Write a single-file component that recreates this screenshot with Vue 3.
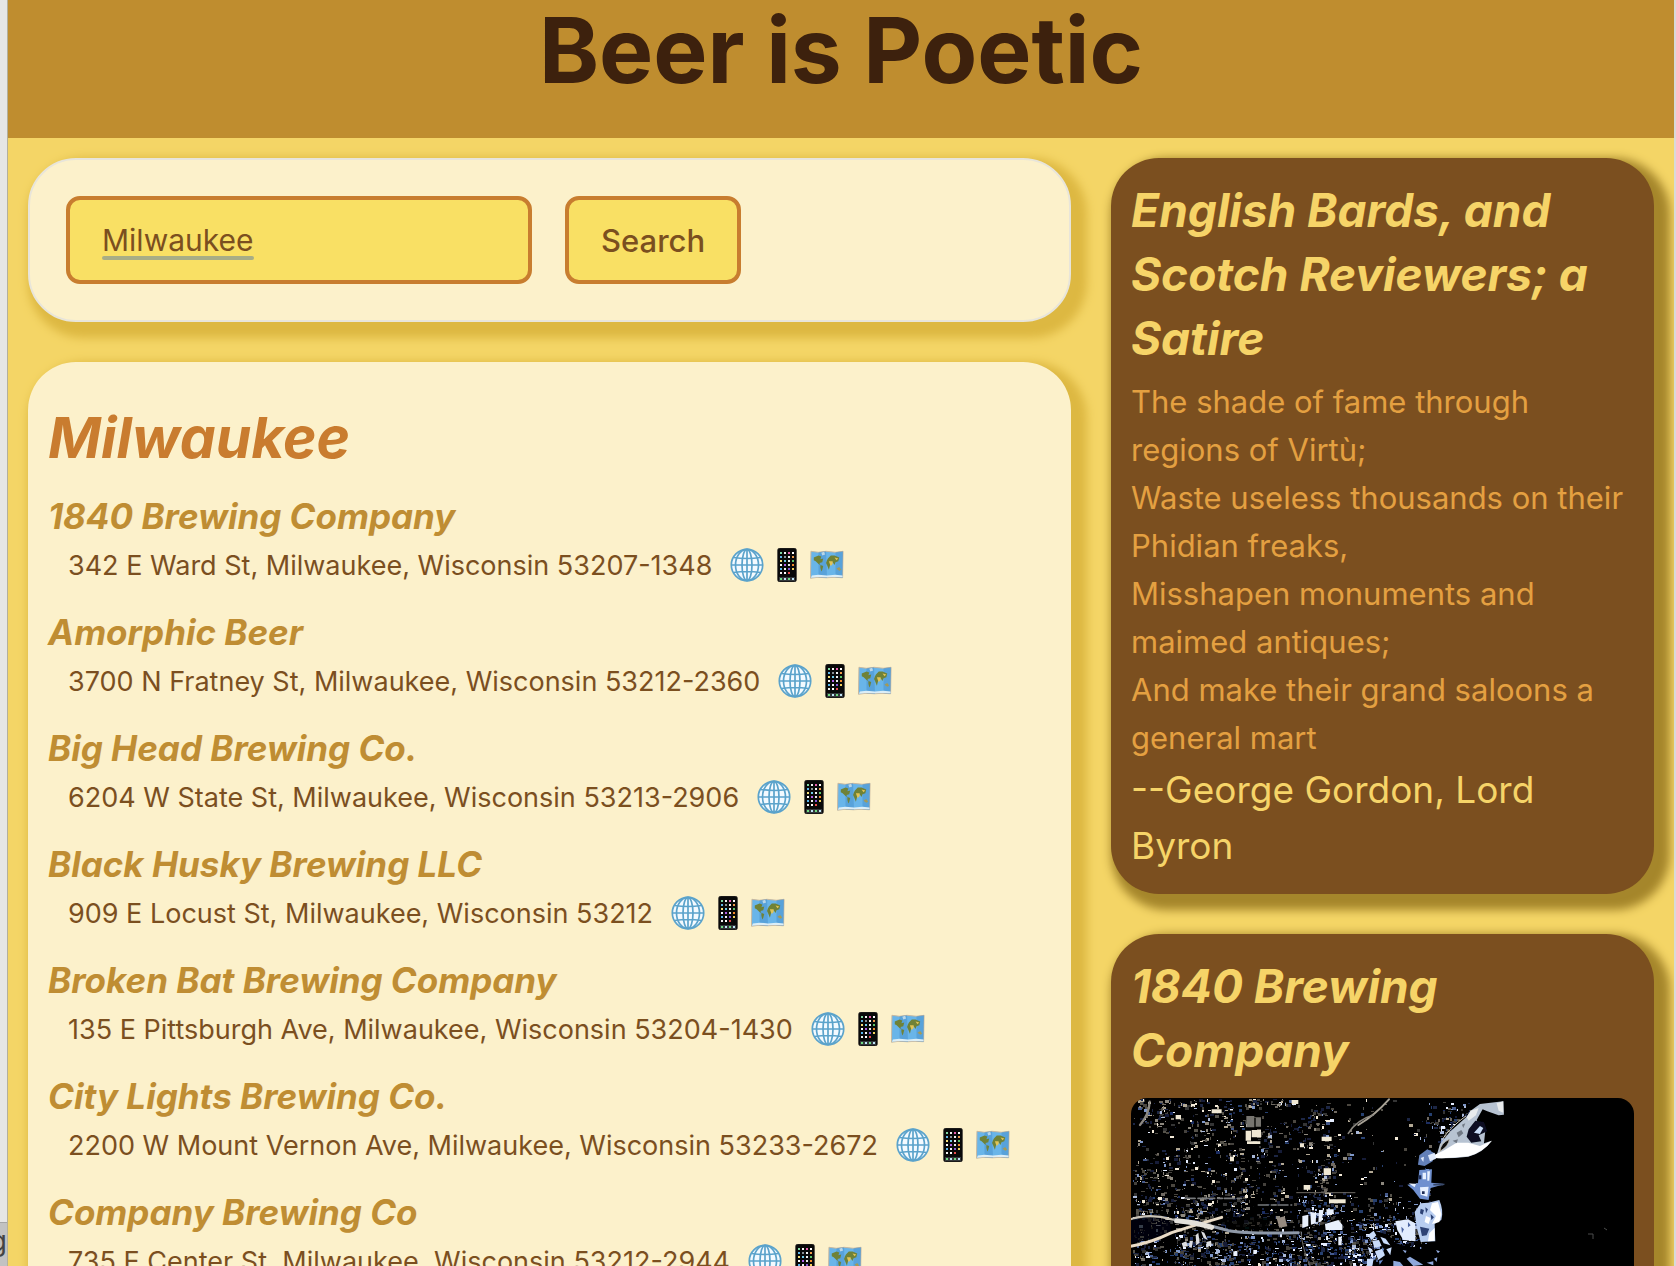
<script setup>
import { ref } from 'vue'

const query = ref('Milwaukee')

const breweries = [
  { name: '1840 Brewing Company', address: '342 E Ward St, Milwaukee, Wisconsin 53207-1348' },
  { name: 'Amorphic Beer', address: '3700 N Fratney St, Milwaukee, Wisconsin 53212-2360' },
  { name: 'Big Head Brewing Co.', address: '6204 W State St, Milwaukee, Wisconsin 53213-2906' },
  { name: 'Black Husky Brewing LLC', address: '909 E Locust St, Milwaukee, Wisconsin 53212' },
  { name: 'Broken Bat Brewing Company', address: '135 E Pittsburgh Ave, Milwaukee, Wisconsin 53204-1430' },
  { name: 'City Lights Brewing Co.', address: '2200 W Mount Vernon Ave, Milwaukee, Wisconsin 53233-2672' },
  { name: 'Company Brewing Co', address: '735 E Center St, Milwaukee, Wisconsin 53212-2944' }
]

const poem = [
  'The shade of fame through regions of Virtù;',
  'Waste useless thousands on their Phidian freaks,',
  'Misshapen monuments and maimed antiques;',
  'And make their grand saloons a general mart'
]

// App tiles on the phone icon, row by row
const tileColors = ['#7fd6a0', '#f2f2f2', '#e85fb0', '#fff', '#62b7e8', '#8a8f94', '#f2f2f2', '#ef9a4a', '#f7e07a', '#6ecbe8', '#f2f2f2', '#5cc46a', '#fff', '#b05fe8', '#e8e8e8', '#f08a2c', '#58b7f0', '#f2f2f2', '#8456d8', '#f2d05c', '#f2f2f2', '#fff', '#e84d4d']
const tiles = tileColors.map((color, i) => ({
  x: 10 + (i % 4) * 4,
  y: 4 + Math.floor(i / 4) * 4,
  color
}))

// City lights: deterministic scatter of small blocks, grouped by neighbourhood
let seed = 1840
const random = () => {
  seed = (seed * 1664525 + 1013904223) % 4294967296
  return seed / 4294967296
}
const coast = [[0, 365], [40, 318], [60, 296], [85, 298], [120, 300], [160, 304], [400, 320]]
const coastAt = (y) => {
  const i = coast.findIndex((p) => p[0] > y)
  const [a, b] = [coast[i - 1], coast[i]]
  return a[1] + ((b[1] - a[1]) * (y - a[0])) / (b[0] - a[0])
}
const warm = ['#f3ead8', '#b3a995', '#8d887e', '#6f6a62', '#4b4740']
const cool = ['#e6eeff', '#7f97c8', '#26406f', '#1a2f63', '#445a8c', '#a9b8d8']
const dim = ['#343434', '#1d2644', '#45423d', '#141c38', '#56534c']
const pick = (list) => list[Math.floor(random() * list.length)]
const districts = Array.from({ length: 30 * 30 }, () => random())
const blocks = []
for (let i = 0; i < 15000; i++) {
  const y = Math.floor(random() * 260)
  const x = Math.floor(random() * 350)
  const bright = random()
  const keep = random()
  if (x > coastAt(y)) continue
  if (x % 41 < 2 || y % 27 < 1) continue
  let density = districts[Math.floor(y / 10) * 30 + Math.floor(x / 14)] * 0.85
  if (y < 95) density *= 0.75
  if (x > 205 && x < 285 && y < 125) density *= 0.2
  if (y > 28 && y < 50 && x < 48) density *= 0.15
  if (x > 153 && x < 166 && y > 50 && y < 130) density *= 0.1
  if (y > 95) density = density * 0.8 + 0.15
  if (y > 120 && x > 150) density += 0.2
  if (keep > density) continue
  const chilly = y > 135 || (y > 95 && x > 165) || x > 285
  const palette = bright < 0.5 ? dim : random() < (chilly ? 0.85 : 0.3) ? cool : warm
  blocks.push({
    x,
    y,
    w: 1 + Math.floor(random() * 4),
    h: 1 + Math.floor(random() * 3),
    color: pick(palette)
  })
}
</script>

<template>
  <div class="desktop">
    <svg class="symbols" aria-hidden="true">
      <symbol id="globe" viewBox="0 0 34 34">
        <circle cx="17" cy="17" r="16" fill="#f3faff" />
        <g fill="none" stroke="#5ba3cb" stroke-width="1.7">
          <circle cx="17" cy="17" r="15.7" />
          <ellipse cx="17" cy="17" rx="11.5" ry="15.7" />
          <ellipse cx="17" cy="17" rx="5" ry="15.7" />
          <path d="M17 1v32M1.500 17h31M3.500 9.500Q17 11.500 30.500 9.500M3.500 24.500Q17 22.500 30.500 24.500" />
        </g>
      </symbol>
      <symbol id="phone" viewBox="0 0 34 34">
        <rect x="7.500" y="0" width="19" height="34" rx="2.500" fill="#090909" stroke="#44403a" stroke-width=".6" />
        <rect v-for="(t, i) in tiles" :key="i" :x="t.x" :y="t.y" width="2" height="2" :fill="t.color" />
        <path d="M9 29h16v4H9z" fill="#34383c" />
        <path d="M10 30h2v2h-2zM18 30h2v2h-2z" fill="#70dc82" />
        <path d="M14 30h2v2h-2zM22 30h2v2h-2z" fill="#bfe4f6" />
      </symbol>
      <symbol id="map" viewBox="0 0 36 34">
        <path d="M1 2.500l8 1 8-1 10 1 8-1-.5 28-8-.5-9 .5-9-.5-8 1z" fill="#69b5e9" stroke="#c8b79e" stroke-width="1" />
        <path d="M9 3.500l8-1 1 28-9-.5zM27 3.500l8-1-.5 28-7.500-.5z" fill="#4b92cd" opacity=".55" />
        <path d="M2 28l7-.8 9 .8 9-.8 7.500.8v2l-8-.4-9 .4-9-.4-7.500 1z" fill="#dceef7" />
        <path d="M4 9l5-2 3 1-1 3 3-1-1 4-3 1 1 2-2-1-3-3-2-1zM11 17l3 1-1 4-1 2-1-4zM19 10l3-3 4 0 5 2-1 4-3 1-1 3-2-3-2 0-1 4-1 4-2-5-1-2 1-3z" fill="#6f8237" />
        <path d="M20 13l4 0 0 3-2 2-1-2zM26 9l4 1-2 2z" fill="#e3c454" />
        <path d="M28 21l3-2 2 3-2 1z" fill="#a59a55" />
        <path d="M12 4l3-1 1 3-3 1z" fill="#b9d6e8" />
      </symbol>
    </svg>

    <div class="backdrop-left"><span class="backdrop-tab">g</span></div>

    <div class="window">
      <header class="banner">
        <h1>Beer is Poetic</h1>
      </header>

      <main class="columns">
        <div class="primary">
          <form class="card search" @submit.prevent>
            <div class="field">
              <input v-model="query" type="text" aria-label="City" />
              <span class="spelling-mark"></span>
            </div>
            <button type="submit">Search</button>
          </form>

          <section class="card results">
            <h2>Milwaukee</h2>
            <ul>
              <li v-for="b in breweries" :key="b.name">
                <h3>{{ b.name }}</h3>
                <p>
                  <span>{{ b.address }}</span>
                  <a href="#" aria-label="Website"><svg><use href="#globe" /></svg></a>
                  <a href="#" aria-label="Phone"><svg><use href="#phone" /></svg></a>
                  <a href="#" aria-label="Map"><svg><use href="#map" /></svg></a>
                </p>
              </li>
            </ul>
          </section>
        </div>

        <aside class="secondary">
          <section class="card dark">
            <h2>English Bards, and Scotch Reviewers; a Satire</h2>
            <p v-for="line in poem" :key="line" class="verse">{{ line }}</p>
            <p class="author">--George Gordon, Lord Byron</p>
          </section>

          <section class="card dark">
            <h2>1840 Brewing Company</h2>
            <svg class="satellite" viewBox="0 0 503 260" role="img" aria-label="Satellite view of Milwaukee">
              <filter id="soft"><feGaussianBlur stdDeviation=".5" /></filter>
              <rect width="503" height="260" fill="#000" />
              <g filter="url(#soft)">
                <rect v-for="(b, i) in blocks" :key="i" :x="b.x" :y="b.y" :width="b.w" :height="b.h" :fill="b.color" />

                <!-- inland: roads, rail yards, large roofs -->
                <g transform="scale(.3333) translate(-18 -24)">
                  <path d="M0 392Q70 368 135 392L140 425Q80 450 18 460Z" fill="#05070c" opacity=".7" />
                  <path d="M255 385Q330 375 440 385L430 415L340 422Z" fill="#000" opacity=".8" />
                  <path d="M375 345Q440 352 505 355M535 425Q610 410 650 378M18 350H110" fill="none" stroke="#000" stroke-width="9" />
                  <g fill="none" stroke-linecap="round">
                    <path d="M10 390Q70 368 140 388L190 395" stroke="#c9c3b7" stroke-width="7" />
                    <path d="M10 470Q75 460 140 428Q200 408 290 382" stroke="#eadcc7" stroke-width="9" />
                    <path d="M150 390Q230 398 310 422Q370 432 520 428" stroke="#8f99a8" stroke-width="9" />
                    <path d="M155 392Q210 396 260 412" stroke="#e4e1da" stroke-width="15" />
                    <path d="M700 105Q750 75 792 28" stroke="#a8a296" stroke-width="6" />
                    <path d="M670 130Q695 90 745 75" stroke="#8c8881" stroke-width="5" />
                    <path d="M45 105Q72 75 74 35" stroke="#8c8881" stroke-width="7" />
                    <path d="M528 425Q530 470 555 528M515 308H690" stroke="#6e6a63" stroke-width="3" />
                    <path d="M180 325H350M400 345H500" stroke="#77797c" stroke-width="5" stroke-dasharray="30 9 14 6" />
                  </g>
                  <path d="M362 122h16v30h-16zM380 120h28v22h-28zM366 154h40v8h-40zM590 140h30v13h-30zM596 235h22v20h-22zM152 75h16v13h-16zM315 200h12v14h-12zM525 160h12v12h-12zM500 30h20v12h-20zM260 58h30v12h-30zM612 328h50v12h-50zM536 285h20v14h-20z" fill="#f0e8d4" />
                  <path d="M364 78h24v34h-24zM392 82h16v28h-16z" fill="#77756f" />
                  <path d="M532 378l18-4v34l-18 6zM556 366l18 2-2 32-14 4zM582 360l14 0-6 34-10 4zM604 358h22v12l-20 8zM600 402l40-12 12 14v16l-50 0zM640 440h10v26h-10zM325 484h12v14h-12zM385 480h10v12h-10z" fill="#e9f0fb" />
                  <path d="M170 460l14-6 4 14-14 4zM194 452l10 0-4 22-8-4zM212 436l8-8 4 30-10 8zM228 424l10 4 10 22-12-6zM244 456l14-4 2 14-14 6z" fill="#dcdde0" />
                  <path d="M455 385l24-6 8 30-24 4z" fill="#958a80" />
                </g>

                <!-- shoreline -->
                <g transform="scale(.3333) translate(807 -24)">
                  <path d="M112 190L120 162L150 125L200 80L212 62L240 42L310 34L312 74L296 76L262 64L248 58L230 90L240 112L256 122L252 160L275 152Q250 188 205 200Q150 206 105 204Z" fill="#b7c3d2" />
                  <path d="M104 194L130 182L170 158L205 158L240 168L276 152Q250 186 205 199Q150 206 104 204Z" fill="#fff" />
                  <path d="M200 82L212 62L236 54L228 76L206 92ZM290 40L310 34V68L296 62Z" fill="#e8ebec" />
                  <path d="M206 118L226 92L252 96L262 124L236 136L244 154L214 158L200 140Z" fill="#0a1020" />
                  <path d="M222 128L240 108L250 114L240 132Z" fill="#c9dcf7" />
                  <path d="M170 128l14-8 6 10-14 12zM158 152l16-4-4 12zM186 104l10-4-6 14z" fill="#6f7884" />
                  <path d="M120 184Q122 160 148 148Q146 168 120 184Z" fill="#0a0c10" stroke="#c9bda8" stroke-width="2" />
                  <path d="M126 150Q150 112 198 78" fill="none" stroke="#d6cfbf" stroke-width="3" />
                  <path d="M58 196L82 178L104 190L98 214L74 228L54 224Z" fill="#6380b8" />
                  <path d="M84 196l20-8 4 18-18 8zM62 204l10-4-2 16z" fill="#dfe9fb" />
                  <path d="M58 240L96 238L94 278L136 282L92 294L86 330L60 326L40 300L22 284L54 280Z" fill="#6f90cf" />
                  <path d="M68 248l10 0 0 20-10 0zM82 244l8 0-2 28-6 0zM60 292l26-2-4 30-20-6zM26 280l22 2-4 10z" fill="#e9f1ff" />
                  <path d="M66 304h8v8h-8zM56 256h8v12h-8z" fill="#1c2c55" />
                  <path d="M84 338L118 330Q132 362 124 390L104 402L106 454L62 456L50 412L44 366L62 340Z" fill="#b8cdf0" />
                  <path d="M96 340l18-4 10 36-6 24-22 6 12-24-18-18zM78 378l14 6-6 18-12-6zM88 430l16-16 0 38-20 2z" fill="#fff" />
                  <path d="M62 356l10 4-4 14-8-4zM76 352l8 6-6 12zM60 410l28 6-8 20-14 2zM92 372l10 10-8 8z" fill="#2d4274" />
                  <path d="M-14 394L24 388L46 400L46 454L10 450L-8 420Z" fill="#e2ecfd" />
                  <path d="M4 410l8 8-6 12zM24 396l8 10-8 6z" fill="#4b64a0" />
                  <path d="M100 284h30" stroke="#39496a" stroke-width="5" />
                  <path d="M-90 420Q-30 430 -14 458L20 470H56L130 456V530H-70Q-30 495 -60 462Z" fill="#000" />
                  <path d="M-20 512l20 4 10 12h-30zM20 506l10-6 40 24-30 4zM60 470l6 4-6 4zM108 480l12 4-6 6zM102 506l10-4-2 14zM80 518l20-4 0 12zM8 480l12 2-4 8z" fill="#8fa8dc" />
                </g>

                <!-- inner harbour -->
                <g transform="scale(.3333) translate(-18 -24)">
                  <path d="M728 436l18-14 8 14-14 14zM742 452l20-2 8 18-22 6zM766 440l16 6 14 20-20-6zM728 470l14 8-6 16zM750 484l22-8 8 20-20 14zM726 506l20 0-4 22h-16zM784 478l16-6-4 24z" fill="#c9dcfa" />
                  <path d="M748 440l10 4-4 6zM770 474l8 2-4 8zM744 498l10 4-8 10zM762 512l12-2-10 14z" fill="#6d8fd0" />
                </g>
                <path d="M457 136h5v5M473 130l3 2" fill="none" stroke="#4b4d4c" />
              </g>
            </svg>
          </section>
        </aside>
      </main>
    </div>

    <div class="backdrop-right"></div>
  </div>
</template>

<style>
body {
  margin: 0;
}
</style>

<style scoped>
.desktop {
  display: grid;
  grid-template-columns: 8px minmax(0, 1fr) 2px;
  height: 100vh;
  overflow: hidden;
  font-family: Inter, "Liberation Sans", sans-serif;
  color: #7b4f1f;
}

.symbols {
  position: absolute;
  width: 0;
  height: 0;
}

h1,
h2,
h3,
p,
ul {
  margin: 0;
  padding: 0;
}

.backdrop-left {
  display: flex;
  flex-direction: column;
  justify-content: flex-end;
  overflow: hidden;
  background: #e6e6e6;
  border-right: 1px solid #b4b09c;
  box-sizing: border-box;
}

.backdrop-tab {
  display: flex;
  justify-content: flex-end;
  height: 44px;
  background: #c2c2c2;
  border-top: 1px solid #a6a6a6;
  box-sizing: border-box;
  color: #444;
  font-size: 28px;
  line-height: 36px;
}

.backdrop-right {
  background: #d9d9d9;
}

.window {
  overflow: hidden;
  background: #f4d566;
}

.banner {
  padding-bottom: 38px;
  background: #bf8d2f;
  text-align: center;
}

h1 {
  color: #3d210d;
  font-size: 91px;
  line-height: 100px;
  font-weight: 700;
}

.columns {
  display: grid;
  grid-template-columns: minmax(0, 1083fr) minmax(0, 583fr);
}

.card {
  box-sizing: border-box;
  margin: 20px 20px 40px;
  border-radius: 48px;
  background: #fcf1cb;
  box-shadow: 8px 8px 10px 8px #ddb842;
}

.primary,
.secondary {
  isolation: isolate;
}

.search {
  display: flex;
  gap: 33px;
  padding: 36px;
  border: 2px solid #e8e5da;
}

.field {
  position: relative;
  width: 466px;
}

.search input,
.search button {
  box-sizing: border-box;
  height: 88px;
  padding: 0 32px;
  border: 4px solid #c87d2f;
  border-radius: 14px;
  background: #f9e064;
  color: #7b4f1f;
  font-family: inherit;
  font-size: 30px;
}

.search input {
  width: 100%;
  outline: none;
}

.spelling-mark {
  position: absolute;
  left: 36px;
  bottom: 24px;
  width: 152px;
  height: 4px;
  border-radius: 2px;
  background: #a8ad85;
}

.search button {
  font-size: 31px;
  font-weight: 500;
}

.results {
  padding: 38px 20px;
}

.results h2 {
  color: #c97c2f;
  font-size: 57px;
  line-height: 76px;
  font-style: italic;
}

.results ul {
  list-style: none;
}

.results li {
  padding: 12px 0 6px;
}

.results h3 {
  color: #bf8d33;
  font-size: 35px;
  line-height: 56px;
  font-style: italic;
}

.results p {
  display: flex;
  align-items: center;
  gap: 6px;
  height: 42px;
  padding-left: 20px;
  font-size: 27px;
  white-space: nowrap;
}

.results p span {
  margin-right: 12px;
}

.results a,
.results a svg {
  display: block;
  width: 34px;
  height: 34px;
}

.dark {
  padding: 20px;
  background: #7b4f1f;
  box-shadow: 8px 8px 10px 8px #a5862b;
}

.dark h2 {
  margin-bottom: 8px;
  color: #f6d468;
  font-size: 46px;
  line-height: 64px;
  font-style: italic;
}

.verse {
  color: #e4a041;
  font-size: 31px;
  line-height: 48px;
}

.author {
  color: #f6d468;
  font-size: 37px;
  line-height: 56px;
}

.satellite {
  display: block;
  width: 100%;
  border-radius: 16px;
  margin-top: 16px;
}
</style>
